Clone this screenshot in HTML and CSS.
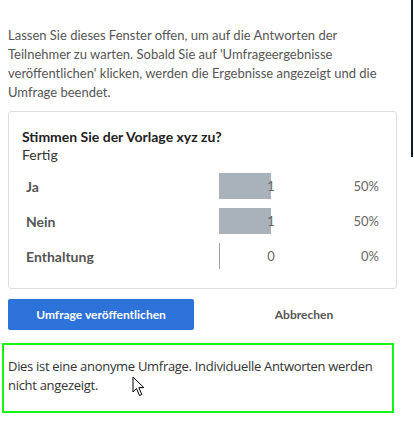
FILE: index.html
```html
<!DOCTYPE html>
<html lang="de">
<head>
<meta charset="utf-8">
<link rel="stylesheet" href="styles.css">
</head>
<body>
<div class="layout">
  <main class="main">
    <p class="intro">Lassen Sie dieses Fenster offen, um auf die Antworten der Teilnehmer zu warten. Sobald Sie auf 'Umfrageergebnisse veröffentlichen' klicken, werden die Ergebnisse angezeigt und die Umfrage beendet.</p>

    <section class="card">
      <h2 class="card-title">Stimmen Sie der Vorlage xyz zu?</h2>
      <div class="card-status">Fertig</div>
      <div class="results">
        <div class="row">
          <span class="label">Ja</span>
          <span class="bar-cell"><span class="bar" style="width:50%"></span><span class="count">1</span></span>
          <span class="pct">50%</span>
        </div>
        <div class="row">
          <span class="label">Nein</span>
          <span class="bar-cell"><span class="bar" style="width:50%"></span><span class="count">1</span></span>
          <span class="pct">50%</span>
        </div>
        <div class="row">
          <span class="label">Enthaltung</span>
          <span class="bar-cell"><span class="bar bar-empty" style="width:0%"></span><span class="count">0</span></span>
          <span class="pct">0%</span>
        </div>
      </div>
    </section>

    <div class="actions">
      <button class="btn btn-primary">Umfrage veröffentlichen</button>
      <button class="btn btn-link">Abbrechen</button>
    </div>

    <div class="notice">
      Dies ist eine anonyme Umfrage. Individuelle Antworten werden nicht angezeigt.
      <svg class="cursor" width="14" height="21" viewBox="0 0 14 21" aria-hidden="true">
        <path d="M1 1 L1 16 L4.5 12.5 L7.5 19.5 L9.8 18.5 L6.9 11.6 L11.8 11.6 Z" fill="#fff" stroke="#000" stroke-width="1" stroke-linejoin="miter"/>
      </svg>
    </div>
  </main>
  <div class="edge"></div>
</div>
</body>
</html>
```

FILE: styles.css
```css
* { box-sizing: border-box; }

html, body {
  margin: 0;
  padding: 0;
  background: #fff;
}

body {
  font-family: Lato, "Liberation Sans", sans-serif;
  color: #555;
}

.layout {
  display: flex;
  align-items: flex-start;
}

.main {
  flex: 1;
  padding: 26px 14px 0 8px;
}

.edge {
  width: 2px;
  height: 157px;
  background: #0f1c2b;
  margin-right: 1px;
  flex: none;
}

.intro {
  margin: 0;
  font-size: 13px;
  line-height: 19px;
  color: #555;
  padding-right: 2px;
}

.card {
  margin-top: 9px;
  border: 1px solid #dcdde1;
  border-radius: 3px;
  padding: 16px 13px 19px 13px;
}

.card-title {
  margin: 0;
  font-size: 14px;
  line-height: 18px;
  font-weight: 700;
  color: #222;
}

.card-status {
  font-size: 14px;
  line-height: 18px;
  color: #333;
}

.results {
  margin-top: 9px;
  display: flex;
  flex-direction: column;
  gap: 9px;
}

.row {
  display: grid;
  grid-template-columns: 1fr 104px 56px;
  align-items: center;
  padding: 0 4px;
  height: 26px;
  font-size: 13px;
}

.label {
  font-size: 14px;
  font-weight: 700;
  color: #555;
}

.bar-cell {
  position: relative;
  height: 26px;
  display: flex;
  align-items: center;
  justify-content: center;
}

.bar {
  position: absolute;
  left: 0;
  top: 0;
  bottom: 0;
  background: #a9b1ba;
}

.bar-empty {
  border-left: 1px solid #9aa1aa;
}

.count {
  position: relative;
  color: #666;
}

.pct {
  text-align: right;
  color: #666;
}

.actions {
  margin-top: 10px;
  display: grid;
  grid-template-columns: 1fr 1fr;
  gap: 17px;
}

.btn {
  height: 31px;
  border: 0;
  font-family: Lato, "Liberation Sans", sans-serif;
  font-size: 12px;
  font-weight: 700;
  padding: 0;
  cursor: pointer;
}

.btn-primary {
  background: #2d72d9;
  color: #fff;
  border-radius: 2px;
}

.btn-link {
  background: transparent;
  color: #555;
}

.notice {
  position: relative;
  margin: 13px 3px 0 -6px;
  border: 2px solid #14f514;
  padding: 12px 6px 16px 4px;
  font-family: "Open Sans", "Noto Sans", sans-serif;
  font-size: 13px;
  letter-spacing: -0.3px;
  line-height: 19px;
  color: #333;
}

.cursor {
  position: absolute;
  left: 128px;
  top: 31px;
}
```
